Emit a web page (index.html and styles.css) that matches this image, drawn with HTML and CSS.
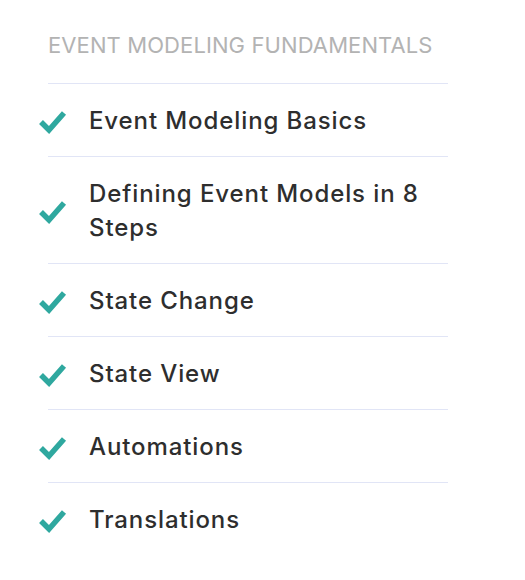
FILE: index.html
```html
<!DOCTYPE html>
<html lang="en">
<head>
  <meta charset="UTF-8">
  <meta name="viewport" content="width=device-width, initial-scale=1.0">
  <title>Event Modeling Fundamentals</title>
  <link rel="stylesheet" href="styles.css">
</head>
<body>
  <div class="course-section">
    <!-- Section heading -->
    <h3 class="section-title">EVENT MODELING FUNDAMENTALS</h3>

    <!-- Lessons -->
    <ul class="lessons">
      <li class="lesson">
        <svg class="check" viewBox="0 0 29 25"><polyline points="3,13 11,21 26,4"/></svg>
        <span class="lesson-name">Event Modeling Basics</span>
      </li>
      <li class="lesson">
        <svg class="check" viewBox="0 0 29 25"><polyline points="3,13 11,21 26,4"/></svg>
        <span class="lesson-name">Defining Event Models in 8 Steps</span>
      </li>
      <li class="lesson">
        <svg class="check" viewBox="0 0 29 25"><polyline points="3,13 11,21 26,4"/></svg>
        <span class="lesson-name">State Change</span>
      </li>
      <li class="lesson">
        <svg class="check" viewBox="0 0 29 25"><polyline points="3,13 11,21 26,4"/></svg>
        <span class="lesson-name">State View</span>
      </li>
      <li class="lesson">
        <svg class="check" viewBox="0 0 29 25"><polyline points="3,13 11,21 26,4"/></svg>
        <span class="lesson-name">Automations</span>
      </li>
      <li class="lesson">
        <svg class="check" viewBox="0 0 29 25"><polyline points="3,13 11,21 26,4"/></svg>
        <span class="lesson-name">Translations</span>
      </li>
    </ul>
  </div>
</body>
</html>
```

FILE: styles.css
```css
/* Basic page styles */
body {
  margin: 0;
  padding: 0;
  background-color: #fff;
  font-family: Inter, "Open Sans", sans-serif;
}

.course-section {
  width: 400px;
  padding: 30px 0 0 48px;
}

.section-title {
  margin: 0 0 23px;
  font-size: 22px;
  line-height: 30px;
  font-weight: 400;
  letter-spacing: 0.1px;
  color: #b3b3b3;
}

.lessons {
  list-style: none;
  margin: 0;
  padding: 0;
}

.lesson {
  display: flex;
  align-items: center;
  padding: 20px 0 18px;
  border-top: 1px solid #e1e5f6;
}

.check {
  flex: none;
  width: 29px;
  height: 25px;
  margin-left: -10px;
  margin-right: 22px;
}

.check polyline {
  fill: none;
  stroke: #2fa89f;
  stroke-width: 5.5;
}

.lesson-name {
  font-size: 24px;
  line-height: 34px;
  font-weight: 500;
  letter-spacing: 0.9px;
  color: #2e2e2e;
}
```
